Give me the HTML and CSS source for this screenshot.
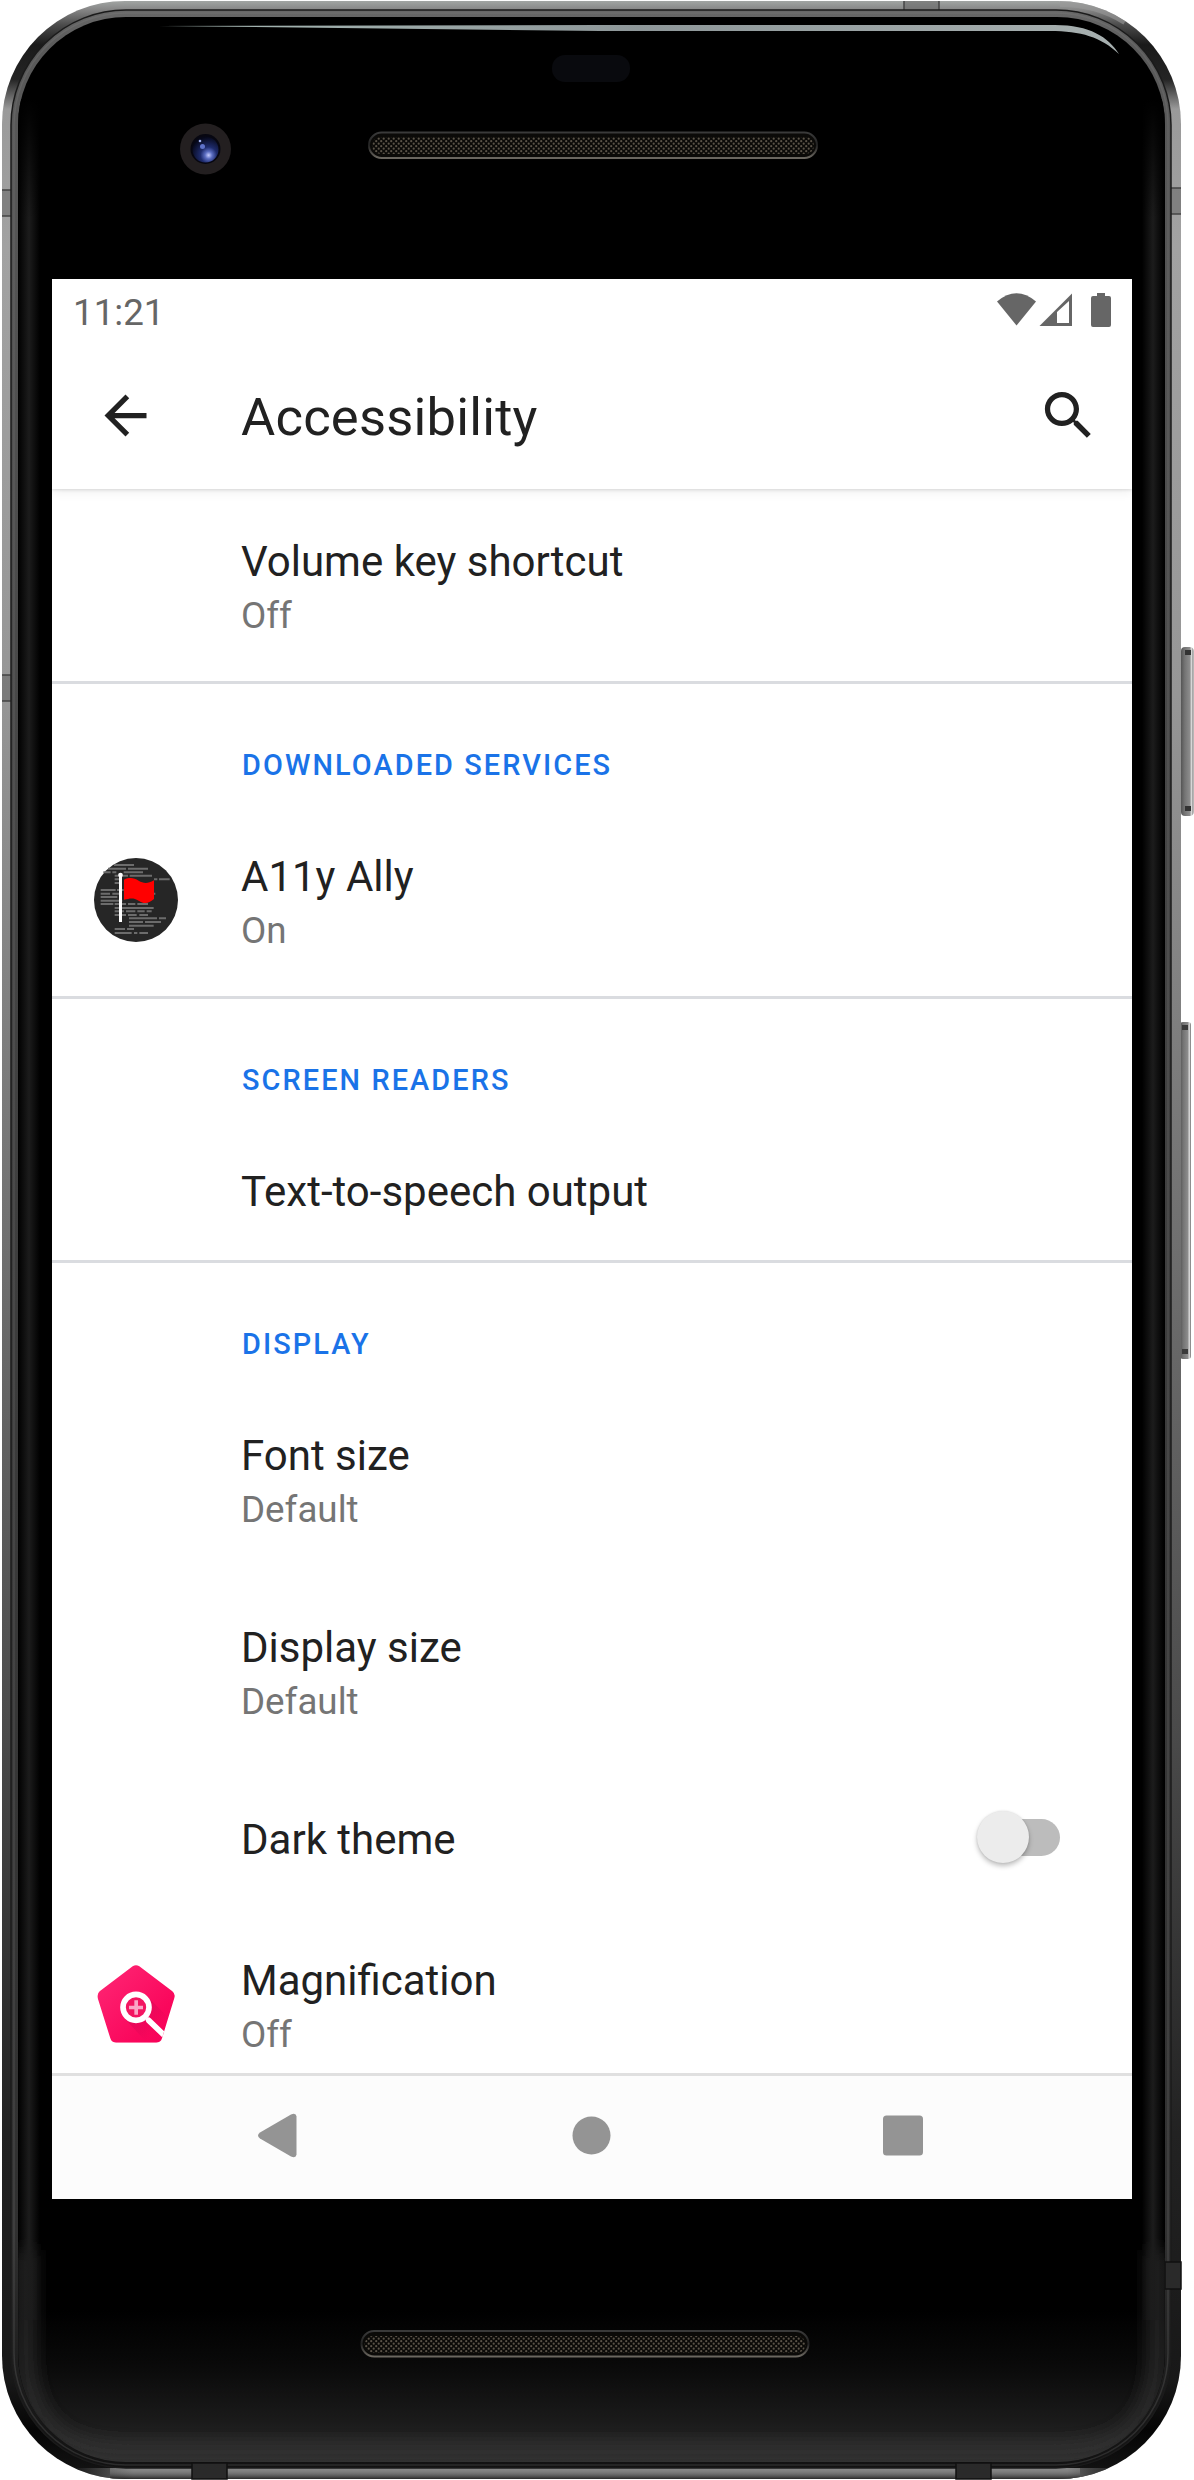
FILE: index.html
```html
<!DOCTYPE html>
<html lang="en">
<head>
<meta charset="utf-8">
<title>Accessibility</title>
<link rel="stylesheet" href="styles.css">
</head>
<body>
<div class="phone">
  <svg class="hardware" viewBox="0 0 1194 2480" aria-hidden="true">
    <defs>
      <linearGradient id="rim" x1="0" y1="0" x2="0" y2="2480" gradientUnits="userSpaceOnUse">
        <stop offset="0" stop-color="#a4a8a6"/><stop offset=".004" stop-color="#858585"/>
        <stop offset=".01" stop-color="#4c4c4c"/><stop offset=".018" stop-color="#1a1a1a"/>
        <stop offset=".032" stop-color="#242424"/><stop offset=".044" stop-color="#9a9a9a"/>
        <stop offset=".1" stop-color="#a2a2a2"/><stop offset=".28" stop-color="#969696"/>
        <stop offset=".5" stop-color="#707070"/><stop offset=".7" stop-color="#4a4a4a"/>
        <stop offset=".86" stop-color="#222"/><stop offset=".96" stop-color="#181818"/>
        <stop offset=".98" stop-color="#050505"/><stop offset="1" stop-color="#161616"/>
      </linearGradient>
      <linearGradient id="inner" x1="0" y1="0" x2="0" y2="2480" gradientUnits="userSpaceOnUse">
        <stop offset="0" stop-color="#6c6c6c"/><stop offset=".02" stop-color="#5a5a5a"/>
        <stop offset=".3" stop-color="#474747"/><stop offset=".6" stop-color="#3a3a3a"/>
        <stop offset=".9" stop-color="#303030"/><stop offset=".98" stop-color="#161616"/><stop offset="1" stop-color="#111"/>
      </linearGradient>
      <linearGradient id="chin" x1="0" y1="2310" x2="0" y2="2462" gradientUnits="userSpaceOnUse">
        <stop offset="0" stop-color="#000"/><stop offset=".35" stop-color="#090909"/>
        <stop offset=".75" stop-color="#1b1b1b"/><stop offset="1" stop-color="#303030"/>
      </linearGradient>
      <linearGradient id="glow"><stop offset="0" stop-color="#1c1c1c" stop-opacity="0"/><stop offset=".5" stop-color="#1c1c1c"/><stop offset="1" stop-color="#1c1c1c" stop-opacity="0"/></linearGradient>
      <linearGradient id="glowTop" x1="0" y1="0" x2="0" y2="1"><stop offset="0"/><stop offset="1" stop-opacity="0"/></linearGradient>
      <linearGradient id="foot" x1="70" y1="0" x2="1120" y2="0" gradientUnits="userSpaceOnUse">
        <stop offset="0" stop-color="#666" stop-opacity="0"/><stop offset=".06" stop-color="#686868"/>
        <stop offset=".95" stop-color="#686868"/><stop offset="1" stop-color="#444" stop-opacity=".3"/>
      </linearGradient>
      <linearGradient id="footShade" x1="0" y1="0" x2="0" y2="1"><stop offset="0" stop-color="#fff" stop-opacity=".2"/><stop offset="1" stop-color="#000" stop-opacity=".6"/></linearGradient>
      <linearGradient id="key"><stop offset="0" stop-color="#555"/><stop offset=".3" stop-color="#747474"/><stop offset=".7" stop-color="#8c8c8c"/><stop offset=".85" stop-color="#dcdcdc"/><stop offset="1" stop-color="#6d6d6d"/></linearGradient>
      <linearGradient id="sheen"><stop offset="0" stop-color="#a8bab6"/><stop offset=".5" stop-color="#8e9799"/><stop offset="1" stop-color="#a7b0b0"/></linearGradient>
      <radialGradient id="lens" cx=".62" cy=".72" r=".7"><stop offset="0" stop-color="#c6cdff"/><stop offset=".2" stop-color="#5a6cc0"/><stop offset=".45" stop-color="#1e2b6c"/><stop offset="1" stop-color="#060819"/></radialGradient>
      <pattern id="mesh" width="5" height="5" patternUnits="userSpaceOnUse"><rect width="5" height="5" fill="#0b0a08"/><circle cx="1.2" cy="1.2" r="1.1" fill="#5a5348"/><circle cx="3.7" cy="3.7" r="1.1" fill="#5a5348"/></pattern>
      <linearGradient id="slot" x1="0" y1="0" x2="0" y2="1"><stop offset="0" stop-color="#3a3a3a"/><stop offset=".5" stop-color="#222"/><stop offset="1" stop-color="#6b6760"/></linearGradient>
      <clipPath id="shell"><rect x="2" y="1" width="1179" height="2478" rx="123"/></clipPath>
      <clipPath id="glass"><rect x="18" y="17" width="1147" height="2445" rx="108"/></clipPath>
      <filter id="soft" x="-20%" y="-20%" width="140%" height="140%"><feGaussianBlur stdDeviation="9"/></filter>
    </defs>
    <rect x="1181" y="647" width="12.5" height="169" rx="4" fill="url(#key)"/>
    <path d="M1185 650h6v5h-6zM1185 806h6v5h-6z" fill="#333"/>
    <rect x="1180" y="1022" width="11" height="337" rx="3" fill="url(#key)"/>
    <path d="M1182 1025h6v5h-6zM1182 1349h6v5h-6z" fill="#3a3a3a"/>
    <rect x="2" y="1" width="1179" height="2478" rx="123" fill="url(#rim)"/>
    <g clip-path="url(#shell)">
      <rect x="70" y="2468" width="1050" height="11" fill="url(#foot)"/>
      <rect x="110" y="2468" width="970" height="11" fill="url(#footShade)"/>
      <path d="M1060 1c70 0 121 50 121 130" fill="none" stroke="#999" stroke-width="12" stroke-dasharray="70 200" opacity=".6"/>
      <g fill="#666" fill-opacity=".55" stroke="#444" stroke-width="1.5">
        <path d="M1 190h18v26H1zM1 675h18v26H1zM1164 188h19v26h-19zM904 0h35v18h-35z"/>
      </g>
    </g>
    <rect x="11" y="10" width="1160" height="2458" rx="115" fill="url(#inner)" stroke="#1b1b1b" stroke-width="1.5"/>
    <rect x="14" y="13" width="1154" height="2452" rx="112" fill="none" stroke="#8a8a8a" stroke-opacity=".22" stroke-width="1.5"/>
    <g fill="#2a2a2a" stroke="#111" stroke-width="1.5">
      <path d="M192 2463h35v16h-35zM956 2463h35v16h-35zM1165 2262h16v27h-16z"/>
    </g>
    <rect x="18" y="17" width="1147" height="2445" rx="108"/>
    <g clip-path="url(#glass)">
      <rect x="18" y="2310" width="1147" height="152" fill="url(#chin)"/>
      <path d="M26 2250v104q0 98 98 98h935q98 0 98-98v-104" fill="none" stroke="#303030" stroke-width="14" filter="url(#soft)"/>
      <rect x="18" y="100" width="22" height="2220" fill="url(#glow)"/>
      <rect x="1142" y="100" width="22" height="2220" fill="url(#glow)"/>
      <rect x="18" y="99" width="1147" height="120" fill="url(#glowTop)"/>
    </g>
    <path d="M159 26 600 25h455c35 0 53 12 64 29-18-17-38-23-69-23H600Z" fill="url(#sheen)"/>
    <rect x="552" y="55" width="78" height="27" rx="13" fill="#090a0e"/>
    <circle cx="205.5" cy="149" r="25.5" fill="#231f20"/>
    <circle cx="205.5" cy="149" r="15" fill="#070711"/>
    <circle cx="205.5" cy="149.5" r="13" fill="url(#lens)"/>
    <circle cx="202.5" cy="146.5" r="2.5" fill="#5f72c9"/>
    <circle cx="200" cy="141" r="1.3" fill="#9fb0ee"/>
    <rect x="369" y="132.5" width="448" height="25.5" rx="12.75" fill="#0b0a08" stroke="url(#slot)" stroke-width="2"/>
    <rect x="372" y="137" width="442" height="17" rx="8.5" fill="url(#mesh)"/>
    <rect x="361.5" y="2331" width="447" height="25.5" rx="12.75" fill="#0b0a08" stroke="url(#slot)" stroke-width="2"/>
    <rect x="364.5" y="2336" width="441" height="17" rx="8.5" fill="url(#mesh)"/>
  </svg>

  <main class="screen">
    <div class="status-bar">
      <span class="clock">11:21</span>
      <svg class="status-icons" viewBox="997 290 115 40" aria-hidden="true">
        <path d="M997 301.500q19.500-16.500 39 0L1016.500 325.500Z"/>
        <path fill-rule="evenodd" d="M1039.500 326 1072 293.500V326ZM1057 312v11h12V301Z"/>
        <path d="M1097 293h8v3h4q2 0 2 2v27q0 2-2 2h-16q-2 0-2-2v-27q0-2 2-2h4z"/>
      </svg>
    </div>
    <header class="app-bar">
      <svg class="icon" viewBox="0 0 24 24" aria-label="Back"><path d="M20 11H7.830l5.590-5.590L12 4l-8 8 8 8 1.410-1.410L7.830 13H20v-2z"/></svg>
      <h1 class="title">Accessibility</h1>
      <svg class="icon" viewBox="0 0 24 24" aria-label="Search"><path d="M15.500 14h-.790l-.280-.270C15.410 12.590 16 11.110 16 9.500 16 5.910 13.090 3 9.500 3S3 5.910 3 9.500 5.910 16 9.500 16c1.610 0 3.090-.590 4.230-1.570l.270.280v.790l5 4.990L20.490 19l-4.990-5zm-6 0C7.010 14 5 11.990 5 9.500S7.010 5 9.500 5 14 7.010 14 9.500 11.990 14 9.500 14z"/></svg>
    </header>

    <div class="list">
      <div class="row">
        <div class="row-icon"></div>
        <div class="row-text"><div class="name">Volume key shortcut</div><div class="summary">Off</div></div>
      </div>
      <h2 class="category">Downloaded services</h2>
      <div class="row">
        <div class="row-icon">
          <svg viewBox="42 54 252 252" aria-hidden="true">
            <circle cx="168" cy="180" r="126" fill="#262626"/>
            <path fill="none" stroke="#6c6c6c" stroke-width="6" d="M102 75h60M84 86h54M144 86h60M70 97h22M97 97h12M131 97h58M104 107h40M149 107h67M104 118h20M222 118h10M237 118h32M104 129h14M62 150h45M111 150h20M62 161h28M97 161h20M222 161h4M62 171h50M62 182h65M62 192h38M104 192h34M144 192h22M172 192h32M104 204h117M104 214h28M138 214h28M172 214h22M200 214h15M104 225h34M144 225h26M178 225h26M147 235h84M237 235h21M147 246h42M195 246h48M147 257h74M104 267h31M141 267h21M104 279h51M162 279h10M178 279h26"/>
            <path d="M132 119c18-8 30-5 44 3s26 10 46-1v56c-18 15-30 15-46 5s-26-7-44-3z" fill="red"/>
            <path d="M117 104h9v142h-9z" fill="#fff"/><circle cx="121.500" cy="105" r="7" fill="#fff"/>
          </svg>
        </div>
        <div class="row-text"><div class="name">A11y Ally</div><div class="summary">On</div></div>
      </div>
      <h2 class="category">Screen readers</h2>
      <div class="row">
        <div class="row-icon"></div>
        <div class="row-text"><div class="name">Text-to-speech output</div></div>
      </div>
      <h2 class="category">Display</h2>
      <div class="row">
        <div class="row-icon"></div>
        <div class="row-text"><div class="name">Font size</div><div class="summary">Default</div></div>
      </div>
      <div class="row">
        <div class="row-icon"></div>
        <div class="row-text"><div class="name">Display size</div><div class="summary">Default</div></div>
      </div>
      <div class="row">
        <div class="row-icon"></div>
        <div class="row-text"><div class="name">Dark theme</div></div>
        <div class="switch"><div class="thumb"></div></div>
      </div>
      <div class="row">
        <div class="row-icon">
          <svg viewBox="42 66 252 252" aria-hidden="true">
            <defs>
              <linearGradient id="pink" x1="0" y1="0" x2="1" y2="1"><stop offset="0" stop-color="#ff2a77"/><stop offset=".7" stop-color="#fa075c"/><stop offset="1" stop-color="#f50057"/></linearGradient>
              <linearGradient id="cast" x1="0" y1="0" x2="1" y2="1"><stop offset=".2" stop-color="#b00048" stop-opacity=".35"/><stop offset=".6" stop-color="#b00048" stop-opacity="0"/></linearGradient>
              <clipPath id="penta"><path d="M158 79q10-7 20 0l99 75q10 8 6 20l-37 121q-4 13-17 13H108q-13 0-17-13L53 174q-3-12 6-20z"/></clipPath>
            </defs>
            <g clip-path="url(#penta)">
              <path d="M42 66h252v252H42z" fill="url(#pink)"/>
              <path d="M201 169 300 268 300 330 220 330 135 236z" fill="url(#cast)"/>
              <path d="M206 241l52 50" stroke="#fff" stroke-width="17" stroke-linecap="round"/>
            </g>
            <circle cx="168" cy="202" r="31" fill="#f31561"/>
            <circle cx="168" cy="202" r="39" fill="none" stroke="#fff" stroke-width="17"/>
            <path d="M163 181h11v16h15v11h-15v16h-11v-16h-16v-11h16z" fill="#fba6c6"/>
          </svg>
        </div>
        <div class="row-text"><div class="name">Magnification</div><div class="summary">Off</div></div>
      </div>
    </div>

    <nav class="nav-bar">
      <svg class="icon" viewBox="0 0 63 63" aria-label="Back"><path d="M12 28.500 43 10.500q5-2 5.500 2v38q-.5 4-5.500 2L12 34.500q-4-3 0-6z"/></svg>
      <svg class="icon" viewBox="0 0 63 63" aria-label="Home"><circle cx="31.500" cy="31.500" r="19"/></svg>
      <svg class="icon" viewBox="0 0 63 63" aria-label="Overview"><rect x="11" y="11.500" width="40" height="40" rx="3.500"/></svg>
    </nav>
  </main>
</div>
</body>
</html>
```
FILE: styles.css
```css
* { box-sizing: border-box; margin: 0; }

body {
  background: #fff;
  font-family: Roboto, "Liberation Sans", sans-serif;
  color: #212121;
}

.phone {
  display: grid;
  width: 1194px;
  height: 2480px;
  overflow: hidden;
}

.hardware,
.screen { grid-area: 1 / 1; }

.hardware { width: 1194px; height: 2480px; }

.screen {
  z-index: 1;
  display: flex;
  flex-direction: column;
  width: 1080px;
  height: 1920px;
  margin: 279px 0 0 52px;
  background: #fff;
}

.status-bar {
  display: flex;
  justify-content: space-between;
  flex: none;
  height: 63px;
  padding: 11px 20px 0 21px;
  color: #666;
  fill: #666;
}

.clock { font-size: 36.75px; line-height: 46px; }

.status-icons { width: 115px; height: 40px; }

.app-bar {
  z-index: 1;
  display: flex;
  align-items: center;
  flex: none;
  height: 147px;
  padding: 0 32px 0 42px;
  background: #fff;
  box-shadow: 0 1px 3px rgba(0, 0, 0, .12), 0 4px 10px rgba(0, 0, 0, .06);
  clip-path: inset(0 0 -20px 0);
  fill: #212121;
}

.icon { width: 63px; height: 63px; flex: none; }

.title {
  flex: 1;
  padding: 3px 0 0 84px;
  font-size: 52.5px;
  font-weight: 400;
  line-height: 62px;
  letter-spacing: .22px;
}

.list {
  flex: 1;
  min-height: 0;
  overflow: hidden;
}

.row {
  display: flex;
  align-items: center;
  padding-right: 72px;
}

.row-icon {
  width: 189px;
  height: 84px;
  padding-left: 42px;
  flex: none;
}

.row-icon svg { display: block; width: 84px; height: 84px; }

.row-text { flex: 1; padding: 44px 0 40px; }

.name { font-size: 42px; line-height: 57px; }

.summary { color: #757575; font-size: 36.75px; line-height: 51px; }

.category {
  height: 123px;
  padding: 64px 0 0 190px;
  border-top: 3px solid #dadce0;
  color: #1a73e8;
  font-size: 28.875px;
  font-weight: 500;
  line-height: 34px;
  letter-spacing: 2.1px;
  text-transform: uppercase;
}

.switch {
  width: 73px;
  height: 37px;
  border-radius: 19px;
  background: #bcbcbc;
}

.thumb {
  width: 52px;
  height: 52px;
  margin: -8px 0 0 -10px;
  border-radius: 50%;
  background: #ececec;
  box-shadow: 0 3px 5px rgba(0, 0, 0, .25), 0 0 2px rgba(0, 0, 0, .12);
}

.nav-bar {
  display: flex;
  justify-content: center;
  gap: 249px;
  flex: none;
  height: 126px;
  padding: 28px 2px 0 0;
  border-top: 3px solid #e0e0e0;
  background: #fcfcfc;
  fill: #949494;
}
```
